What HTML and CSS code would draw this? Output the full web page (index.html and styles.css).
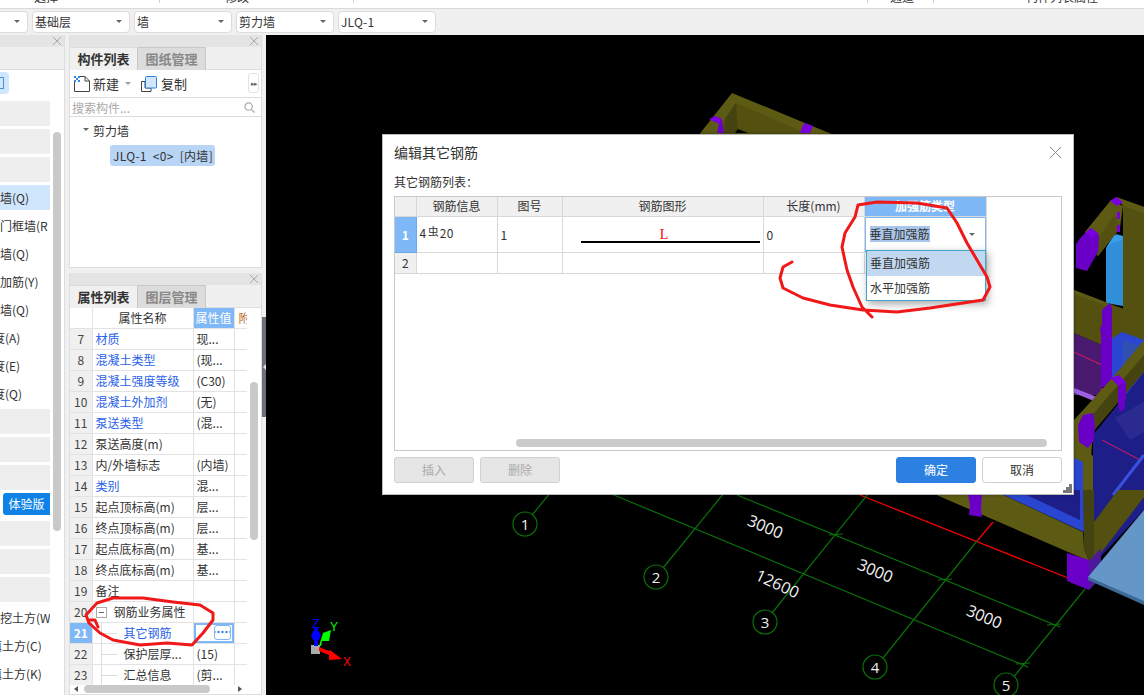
FILE: index.html
```html
<!DOCTYPE html>
<html lang="zh-CN">
<head>
<meta charset="utf-8">
<title>编辑其它钢筋</title>
<link rel="stylesheet" href="styles.css">
</head>
<body>
<div class="app">
  <div class="topstrip">
    <span class="ts ts1">选择</span><span class="ts ts2">修改</span><span class="ts ts3"></span><span class="ts ts4">通道</span><span class="ts ts5">构件列表属性</span>
  </div>
  <div class="toolbar">
    <div class="sel sel-first"><i class="caret"></i></div>
    <div class="sel">基础层<i class="caret"></i></div>
    <div class="sel">墙<i class="caret"></i></div>
    <div class="sel">剪力墙<i class="caret"></i></div>
    <div class="sel sel-latin">JLQ-1<i class="caret"></i></div>
  </div>
  <div class="main">
    <aside class="nav">
      <div class="panelhead"><svg class="close" viewBox="0 0 8 8"><path d="M0 0L8 8M8 0L0 8"/></svg></div>
      <div class="navtabs"></div>
      <div class="navbody">
        <div class="navtool"><span class="navtoolbtn"><i class="navglyph"></i></span></div>
        <ul class="navlist">
          <li class="g"></li><li class="g"></li><li class="g"></li>
          <li class="on">墙(Q)</li>
          <li>门框墙(R</li>
          <li>墙(Q)</li>
          <li>加筋(Y)</li>
          <li>墙(Q)</li>
          <li class="cut">度(A)</li>
          <li class="cut">度(E)</li>
          <li class="cut">度(Q)</li>
          <li class="g"></li><li class="g"></li><li class="g"></li>
          <li class="trial"><span class="badge">体验版</span></li>
          <li class="g"></li><li class="g"></li><li class="g"></li>
          <li>挖土方(W</li>
          <li class="cut2">填土方(C)</li>
          <li class="cut2">填土方(K)</li>
        </ul>
        <div class="navscroll"></div>
      </div>
    </aside>
    <div class="col">
      <section class="panel panel-top">
        <div class="panelhead"><svg class="close" viewBox="0 0 8 8"><path d="M0 0L8 8M8 0L0 8"/></svg></div>
        <div class="tabs"><span class="tab active">构件列表</span><span class="tab">图纸管理</span></div>
        <div class="tools">
          <svg class="ico" viewBox="0 0 16 16"><path class="docline" d="M.5 5V15.500H15.500V5L11 .5H6"/><path class="docline" d="M11 .5V5H15.500"/><path class="doccheck" d="M0 0h2v2H0zM4 0h2v2H4zM2 2h2v2H2zM0 4h2v2H0zM4 4h2v2H4z"/></svg>
          <span class="toollabel">新建</span><i class="caret caret-light"></i>
          <svg class="ico ico-copy" viewBox="0 0 16 16"><path class="docline" d="M.5 5.500H4V12H10V15.500H.5z"/><rect class="copyfront" x="4.500" y=".5" width="11" height="11.500" rx="1"/></svg>
          <span class="toollabel">复制</span>
          <span class="more">&#9656;&#9656;</span>
        </div>
        <div class="search"><span>搜索构件...</span><svg class="mag" viewBox="0 0 12 12"><circle cx="5" cy="5" r="4"/><path d="M8 8l3.500 3.500"/></svg></div>
        <div class="tree">
          <div class="treeroot"><i class="caret caret-tree"></i>剪力墙</div>
          <div class="treeitem">JLQ-1 &lt;0&gt; [内墙]</div>
        </div>
      </section>
      <section class="panel panel-bottom">
        <div class="panelhead"><svg class="close" viewBox="0 0 8 8"><path d="M0 0L8 8M8 0L0 8"/></svg></div>
        <div class="tabs"><span class="tab active">属性列表</span><span class="tab">图层管理</span></div>
        <div class="propwrap">
          <table class="props">
            <colgroup><col class="c-num"><col class="c-name"><col class="c-val"><col class="c-ext"></colgroup>
            <thead><tr><th></th><th>属性名称</th><th class="hl">属性值</th><th class="ext">附加</th></tr></thead>
            <tbody>
              <tr><td class="n">7</td><td class="link">材质</td><td>现...</td><td></td></tr>
              <tr><td class="n">8</td><td class="link">混凝土类型</td><td>(现...</td><td></td></tr>
              <tr><td class="n">9</td><td class="link">混凝土强度等级</td><td>(C30)</td><td></td></tr>
              <tr><td class="n">10</td><td class="link">混凝土外加剂</td><td>(无)</td><td></td></tr>
              <tr><td class="n">11</td><td class="link">泵送类型</td><td>(混...</td><td></td></tr>
              <tr><td class="n">12</td><td>泵送高度(m)</td><td></td><td></td></tr>
              <tr><td class="n">13</td><td>内/外墙标志</td><td>(内墙)</td><td></td></tr>
              <tr><td class="n">14</td><td class="link">类别</td><td>混...</td><td></td></tr>
              <tr><td class="n">15</td><td>起点顶标高(m)</td><td>层...</td><td></td></tr>
              <tr><td class="n">16</td><td>终点顶标高(m)</td><td>层...</td><td></td></tr>
              <tr><td class="n">17</td><td>起点底标高(m)</td><td>基...</td><td></td></tr>
              <tr><td class="n">18</td><td>终点底标高(m)</td><td>基...</td><td></td></tr>
              <tr><td class="n">19</td><td>备注</td><td></td><td></td></tr>
              <tr><td class="n">20</td><td class="group"><span class="minus"></span>钢筋业务属性</td><td></td><td></td></tr>
              <tr><td class="n n-on">21</td><td class="child link">其它钢筋</td><td class="valon"><span class="dots"></span></td><td></td></tr>
              <tr><td class="n">22</td><td class="child">保护层厚...</td><td>(15)</td><td></td></tr>
              <tr><td class="n">23</td><td class="child">汇总信息</td><td>(剪...</td><td></td></tr>
            </tbody>
          </table>
          <div class="vscroll"></div>
        </div>
        <div class="hbar"><i class="tri tri-l"></i><span class="hthumb"></span><i class="tri tri-r"></i></div>
      </section>
    </div>
    <div class="splitter"><span class="handle"><i class="notch"></i></span></div>
    <div class="canvas">
      <svg class="scene" viewBox="266 35 878 660" xmlns="http://www.w3.org/2000/svg">
        <!-- upper olive frame -->
        <polygon class="ol1" points="732,93 880,154 880,200 690,200 690,146"/>
        <polygon class="ol2" points="736,103 880,165 880,200 722,200 722,123"/>
        <polygon class="ol3" points="736,103 725,119 724,133 738,133"/>
        <polygon class="bk" points="735,133 738,129 748,133"/>
        <polygon class="pu1" points="709,119 715,116 722,119 719,124"/>
        <polygon class="pu2" points="719,124 722,119 724,133 717,133"/>
        <polygon class="pu1" points="800,133 804,123 813,126 810,133"/>

        <!-- right side structure -->
        <polygon class="ol2" points="1116,197 1144,207 1144,320 1123,310 1123,205"/>
        <polygon class="ol1" points="1116,197 1144,207 1144,213 1123,206"/>
        <polygon class="lb" points="1106,248 1116,234 1123,236 1123,306 1106,303"/>
        <polygon class="lb2" points="1106,248 1114,235 1123,236 1122,240 1112,243"/>
        <polygon class="ol1" points="1111,200 1085,232 1098,256 1120,228 1123,206"/>
        <polygon class="ol2" points="1098,256 1120,228 1115,214 1090,250"/>
        <rect class="pu1" x="1117" y="212" width="3" height="7"/>
        <rect class="pu1" x="1117" y="225" width="3" height="7"/>
        <polygon class="pu1" points="1110,201 1116,197 1123,202 1117,206"/>
        <polygon class="pu2" points="1082,236 1091,228 1099,235 1098,252 1087,271 1076,268 1076,244"/>
        <polygon class="pu1" points="1085,233 1091,228 1098,233 1093,238"/>

        <polygon class="bu" points="1112,325 1144,338 1144,400 1112,400"/>
        <polygon class="bu2" points="1123,340 1144,348 1144,372 1123,372"/>
        <polygon class="pp" points="1074,333 1102,345 1102,395 1074,395"/>
        <polygon class="ol2" points="1074,290 1110,304 1144,316 1144,340 1122,332 1102,345 1074,333"/>
        <polygon class="ol1" points="1074,290 1108,303 1112,308 1074,294"/>
        <polyline class="pinkline" points="1074,352 1102,365"/>
        <polygon class="lilac" points="1074,388 1097,397 1094,401 1074,393"/>
        <polyline class="pinkline" points="1097,396 1103,388"/>
        <polygon class="pu2" points="1102,310 1110,303 1112,308 1112,383 1101,388 1101,335 1100,328 1102,325"/>

        <!-- navy window lower right -->
        <polygon class="nv" points="1093,435 1144,372 1144,510 1093,565"/>
        <polygon class="nv2" points="1115,418 1144,402 1144,432 1130,440"/>
        <polyline class="pinkline" points="1102,440 1140,460"/>
        <polyline class="blueedge" points="1113,495 1144,455"/>
        <polygon class="ol1" points="1144,340 1144,355 1093,432 1090,470 1074,460 1074,420 1115,375"/>
        <polygon class="ol3" points="1144,355 1144,372 1093,432 1088,420"/>
        <polygon class="pu1" points="1111,378 1119,375 1126,382 1118,386"/>
        <polygon class="pu2" points="1118,386 1126,382 1126,396 1124,410 1120,412 1118,405"/>
        <polygon class="pu2" points="1083,415 1093,413 1095,425 1094,440 1088,448 1079,442 1078,425"/>
        <polygon class="bu" points="1074,458 1083,462 1083,495 1074,495"/>
        <polygon class="ol1" points="1083,447 1093,456 1093,495 1083,495"/>

        <!-- bottom beam -->
        <polygon class="ol1" points="925,490 993,490 1083,532 1084,548 1089,561"/>
        <polygon class="bu" points="993,490 1084,490 1084,532"/>
        <polygon class="nv" points="1016,490 1080,490 1080,520"/>
        <polygon class="ol3" points="1083,490 1094,490 1094,561 1089,561 1084,548"/>
        <polygon class="ol2" points="1094,522 1118,490 1144,490 1144,497 1094,562"/>
        <polygon class="pu2" points="968,495 982,495 981,508 982,517 969,515 970,505"/>
        <polyline class="redline" points="860,495 1068,578"/>
        <polyline class="redline" points="977,541 993,522"/>
        <polygon class="pu2" points="1067,553 1089,560 1089,590 1067,581"/>
        <polygon class="pu3" points="1089,561 1101,548 1101,578 1089,590"/>
        <polygon class="plane" points="1088,577 1144,510 1144,602"/>
        <polygon class="plane2" points="1088,577 1144,601 1144,605 1088,580"/>

        <!-- grid -->
        <g class="grid">
          <line x1="533" y1="514" x2="550" y2="493"/>
          <line x1="663" y1="568" x2="724" y2="493"/>
          <line x1="772" y1="613" x2="868" y2="494"/>
          <line x1="883" y1="658" x2="977" y2="541"/>
          <line x1="1000" y1="694" x2="1085" y2="589"/>
          <line x1="609" y1="493" x2="1028" y2="667"/>
          <line x1="737" y1="495" x2="1060" y2="627"/>
          <path d="M829 535l14 -1M938 580l14 -1M1047 625l14 -1M1016 664l14 -1"/>
          <circle cx="525" cy="524" r="12"/>
          <circle cx="656" cy="577" r="12"/>
          <circle cx="765" cy="622" r="12"/>
          <circle cx="875" cy="667" r="12"/>
          <circle cx="1006" cy="685" r="12"/>
        </g>
        <g class="gridnum">
          <text x="525" y="529.500">1</text>
          <text x="656" y="583">2</text>
          <text x="765" y="628">3</text>
          <text x="875" y="673">4</text>
          <text x="1006" y="691">5</text>
        </g>
        <g class="dim">
          <text transform="translate(763 532) rotate(23)">3000</text>
          <text transform="translate(873 576) rotate(23)">3000</text>
          <text transform="translate(982 622) rotate(23)">3000</text>
          <text transform="translate(775 589) rotate(25)">12600</text>
        </g>

        <!-- axis gizmo -->
        <rect class="ax-grey" x="311" y="645" width="9" height="9"/>
        <rect class="ax-blue" x="314" y="630" width="4" height="16"/>
        <polygon class="ax-blue" points="316,627 321,635 319,640 313,640 311,635"/>
        <rect class="ax-blue" x="313" y="627" width="6" height="1.500"/>
        <polygon class="ax-green" points="319,646 323,633 331,630 329,641 322,641 321,646"/>
        <polygon class="ax-red" points="319,647 329,651 330,650 342,659 329,660 329,655 319,651"/>
        <text class="ax-z" x="316" y="628">Z</text>
        <text class="ax-y" x="334" y="631">Y</text>
        <text class="ax-x" x="347" y="666">X</text>
      </svg>
    </div>
  </div>

  <div class="dialog">
    <div class="dlgtitle">编辑其它钢筋<svg class="dlgclose" viewBox="0 0 11 11"><path d="M0 0L11 11M11 0L0 11"/></svg></div>
    <div class="dlglabel">其它钢筋列表：</div>
    <div class="gridbox">
      <table class="rebar">
        <colgroup><col class="r0"><col class="r1"><col class="r2"><col class="r3"><col class="r4"><col class="r5"></colgroup>
        <thead>
          <tr><th></th><th>钢筋信息</th><th>图号</th><th>钢筋图形</th><th>长度(mm)</th><th class="hl">加强筋类型</th></tr>
        </thead>
        <tbody>
          <tr class="r-a">
            <td class="n n-on">1</td>
            <td class="raised">4<span class="steel">虫</span>20</td>
            <td>1</td>
            <td class="shape"><div class="shapeline"><span class="shapel">L</span></div></td>
            <td>0</td>
            <td class="editing"><span class="seltext">垂直加强筋</span><i class="caret"></i></td>
          </tr>
          <tr class="r-b"><td class="n">2</td><td></td><td></td><td></td><td></td><td></td></tr>
        </tbody>
      </table>
      <div class="gridscroll"></div>
    </div>
    <div class="dlgfoot">
      <button class="btn off">插入</button>
      <button class="btn off">删除</button>
      <span class="spacer"></span>
      <button class="btn primary">确定</button>
      <button class="btn">取消</button>
    </div>
    <ul class="droplist">
      <li class="picked">垂直加强筋</li>
      <li>水平加强筋</li>
    </ul>
    <svg class="grip" viewBox="0 0 9 9"><path d="M6 0h3v3H6zM3 3h3v3H3zM6 3h3v3H6zM0 6h3v3H0zM3 6h3v3H3zM6 6h3v3H6z"/></svg>
  </div>

  <svg class="ink" viewBox="0 0 1144 695" xmlns="http://www.w3.org/2000/svg">
    <polyline points="872,317 862,307 853,287 847,270 842,247 845,233 855,217 858,205 877,202 917,203 947,208 957,223 967,243 977,260 987,277 990,287 983,300 963,303 930,308 897,312 863,310 830,305 803,298 783,288 780,278 783,267 792,262"/>
    <polyline points="97,603 113,598 143,598 173,602 200,605 213,613 213,620 203,633 192,645 167,643 140,645 113,640 100,633 89,623 86,615 97,603"/>
    <polyline points="90,620 95,620 98,627"/>
  </svg>
</div>
</body>
</html>
```

FILE: styles.css
```css
* { box-sizing: border-box; }
html, body { margin: 0; padding: 0; height: 100%; overflow: hidden; }
body { font: 12px/1.2 "Noto Sans CJK SC", "Liberation Sans", sans-serif; color: #333; background: #f0f0f0; }
ul { list-style: none; margin: 0; padding: 0; }
.app { position: relative; width: 1144px; height: 695px; overflow: hidden; display: flex; flex-direction: column; }

.topstrip { height: 9px; flex: none; background: #fff; border-bottom: 1px solid #d9d9d9; display: flex; overflow: hidden; font-size: 12px; line-height: 12px; color: #333; }
.ts { height: 12px; margin-top: -9px; padding-top: 0; border-right: 1px solid #d0d0d0; flex: none; white-space: nowrap; }
.ts1 { width: 160px; padding-left: 34px; }
.ts2 { width: 194px; padding-left: 65px; }
.ts3 { width: 514px; }
.ts4 { width: 66px; padding-left: 22px; }
.ts5 { width: 210px; padding-left: 92px; border-right: 0; }

.toolbar { height: 26px; flex: none; display: flex; gap: 4px; align-items: center; background: #f0f0f0; }
.sel { position: relative; width: 98px; height: 22px; margin-top: -1px; background: #fff; border: 1px solid #dcdcdc; border-radius: 4px; padding-left: 2px; font-size: 12px; line-height: 20px; }
.sel-first { width: 28px; border-left: 0; border-radius: 0 4px 4px 0; }
.sel-latin { letter-spacing: .2px; }
.caret { position: absolute; right: 7px; top: 8px; width: 0; height: 0; border: 3px solid transparent; border-top: 3px solid #666; border-bottom: 0; }

.main { flex: 1; min-height: 0; display: flex; }
.panelhead { position: relative; height: 12px; flex: none; background: #e4e4e4; }
.close { position: absolute; right: 3px; top: 2px; width: 8px; height: 8px; stroke: #a8a8a8; stroke-width: 1; fill: none; }

.nav { width: 65px; flex: none; display: flex; flex-direction: column; background: #fff; border-right: 1px solid #ddd; }
.navtabs { height: 23px; flex: none; background: #f0f0f0; border-bottom: 1px solid #ddd; }
.navbody { position: relative; flex: 1; min-height: 0; overflow: hidden; }
.navtool { height: 31px; padding-top: 2px; }
.navtoolbtn { display: flex; align-items: center; width: 9px; height: 22px; background: #d0e6fc; border-radius: 0 4px 4px 0; }
.navglyph { display: block; width: 4px; height: 12px; border: 1px solid #4a90e2; border-left: 0; }
.navlist { width: 50px; }
.navlist li { height: 25px; margin-bottom: 3px; font-size: 12px; line-height: 25px; white-space: nowrap; overflow: hidden; color: #333; }
.navlist .g { background: #eee; }
.navlist .on { background: #d0e6fc; }
.navlist .cut { text-indent: -7px; }
.navlist .cut2 { text-indent: -10px; }
.navlist .trial { background: transparent; padding-left: 3px; overflow: visible; }
.badge { display: block; height: 22px; margin-top: 1px; background: #0f82e6; color: #fff; border-radius: 3px 0 0 3px; text-align: center; line-height: 22px; font-size: 12px; }
.navscroll { position: absolute; left: 53px; top: 62px; width: 8px; height: 399px; border-radius: 4px; background: #c9c9c9; }

.col { width: 193px; margin-left: 4px; flex: none; display: flex; flex-direction: column; gap: 5px; }
.panel { display: flex; flex-direction: column; background: #fff; border: 1px solid #ddd; border-top: 0; }
.panel-top { height: 233px; }
.panel-bottom { flex: 1; min-height: 0; }
.tabs { height: 23px; flex: none; display: flex; background: #f0f0f0; border-bottom: 1px solid #ddd; }
.tab { width: 68px; height: 23px; background: #dcdcdc; border: 1px solid #c8c8c8; border-left: 0; border-bottom: 0; color: #888; font-weight: 700; font-size: 13px; line-height: 21px; text-align: center; }
.tab.active { background: #f0f0f0; color: #333; border-top: 1px solid #ddd; border-right: 1px solid #c8c8c8; }

.tools { position: relative; height: 28px; flex: none; display: flex; align-items: center; padding-left: 4px; border-bottom: 1px solid #ddd; }
.ico { width: 16px; height: 16px; flex: none; margin-right: 3px; }
.ico-copy { margin-left: 10px; margin-right: 4px; }
.docline { fill: none; stroke: #444; stroke-width: 1; }
.doccheck { fill: #2f86e6; }
.copyfront { fill: #d2e6fb; stroke: #2f7fdc; stroke-width: 1; }
.toollabel { font-size: 13px; }
.caret-light { position: static; margin-left: 6px; border-top-color: #999; }
.more { position: absolute; right: 2px; top: 3px; width: 11px; height: 20px; border: 1px solid #e2e2e2; border-radius: 3px; font-size: 7px; line-height: 18px; text-align: center; letter-spacing: -1px; color: #666; overflow: hidden; background: #fff; }
.search { position: relative; height: 19px; flex: none; padding-left: 2px; line-height: 19px; color: #aaa; font-size: 12px; border-bottom: 1px solid #ddd; }
.mag { position: absolute; right: 6px; top: 4px; width: 11px; height: 11px; fill: none; stroke: #aaa; stroke-width: 1.300; }
.tree { flex: 1; padding: 5px 0 0 0; position: relative; }
.treeroot { position: relative; padding-left: 23px; height: 23px; line-height: 17px; }
.caret-tree { left: 13px; right: auto; top: 6px; border-width: 3px; }
.treeitem { width: 105px; height: 21px; margin: 0 0 0 40px; padding-left: 3px; background: #b9d5f5; border-radius: 3px; line-height: 21px; white-space: nowrap; letter-spacing: .3px; word-spacing: 3px; }

.propwrap { position: relative; flex: 1; min-height: 0; overflow: hidden; }
.props { width: 177px; table-layout: fixed; border-collapse: collapse; font-size: 12px; }
.c-num { width: 22px; } .c-name { width: 101px; } .c-val { width: 41px; } .c-ext { width: 13px; }
.props th, .props td { height: 21px; padding: 0 0 0 3px; border: 1px solid #e2e2e2; border-top: 0; font-weight: 400; white-space: nowrap; overflow: hidden; text-align: left; line-height: 20px; }
.props thead th { height: 20px; text-align: center; padding: 0; line-height: 19px; border-left: 0; }
.props tr > *:first-child { border-left: 0; }
.props tr > *:last-child { border-right: 0; }
.hl { background: #7fb8f7; color: #fff; }
.props th.hl { background: #7fb8f7; color: #fff; }
.props th.ext { color: #c26a1f; text-align: left; padding-left: 4px; }
.props .n { background: #f0f0f0; padding: 0; text-align: center; color: #444; }
.props .n-on, .rebar .n-on { background: #7fb8f7; color: #fff; font-weight: 700; }
.props .link { color: #2a62e8; }
.props .group { padding-left: 25px; position: relative; }
.minus { display: inline-block; width: 11px; height: 11px; margin-left: -22px; margin-right: 7px; vertical-align: -1px; border: 1px solid #aaa; background: linear-gradient(#666, #666) center / 5px 1px no-repeat #fff; }
.props .child { padding-left: 31px; background: linear-gradient(#ddd, #ddd) 8px 0 / 1px 100% no-repeat, linear-gradient(#ddd, #ddd) 8px 10px / 16px 1px no-repeat; }
.props td.valon { box-shadow: inset 0 0 0 2px #7fb8f7; text-align: right; padding-right: 3px; }
.dots { display: inline-block; width: 17px; height: 15px; vertical-align: -2px; border: 1px solid #7fb8f7; border-radius: 3px; background: radial-gradient(circle, #2f7fdc 1.200px, transparent 1.600px) 1.500px center / 4px 4px repeat-x #fff; }
.vscroll { position: absolute; left: 180px; top: 74px; width: 8px; height: 158px; border-radius: 4px; background: #c9c9c9; }
.hbar { position: relative; height: 9px; flex: none; background: #fff; }
.hthumb { position: absolute; left: 14px; top: 0; width: 126px; height: 8px; border-radius: 4px; background: #c9c9c9; }
.tri { position: absolute; top: 1px; width: 0; height: 0; border: 3px solid transparent; }
.tri-l { left: 4px; border-right: 4px solid #555; border-left: 0; }
.tri-r { right: 19px; border-left: 4px solid #555; border-right: 0; }

.splitter { width: 4px; flex: none; }
.handle { display: flex; align-items: center; justify-content: center; width: 4px; height: 100px; margin-top: 282px; background: #6c7079; }
.notch { display: block; width: 0; height: 0; border: 3px solid transparent; border-right: 3px solid #dfe2e6; border-left: 0; }
.canvas { flex: 1; min-width: 0; background: #000; }
.scene { display: block; width: 878px; height: 660px; }

.ol1 { fill: #5d5a14; } .ol2 { fill: #535010; } .ol3 { fill: #454310; }
.bk { fill: #000; }
.pu1 { fill: #7a00e0; } .pu2 { fill: #6a00c8; } .pu3 { fill: #4c1a98; }
.pp { fill: #4a1a70; } .lilac { fill: #9a60e0; }
.lb { fill: #2f8fd8; } .lb2 { fill: #3aa0e8; }
.bu { fill: #2a46d0; } .bu2 { fill: #3050b0; } .nv { fill: #1e1e88; } .nv2 { fill: #2a2a90; }
.plane { fill: #6496c8; } .plane2 { fill: #3c6a94; }
.pinkline { stroke: #e01858; stroke-width: 1; fill: none; }
.blueedge { stroke: #3a50e0; stroke-width: 3; fill: none; }
.redline { stroke: #f00000; stroke-width: 1.300; fill: none; }
.grid line, .grid path { stroke: #0a700a; stroke-width: 1.200; fill: none; }
.grid circle { stroke: #0a700a; stroke-width: 1.200; fill: #000; }
.gridnum text { fill: #f0f0f0; font: 15px "Open Sans", "Liberation Sans", sans-serif; text-anchor: middle; }
.dim text { fill: #f4f4f4; font: 16px "Open Sans", "Liberation Sans", sans-serif; text-anchor: middle; }
.ax-grey { fill: #aaa; } .ax-blue { fill: #0000ff; } .ax-green { fill: #00ff00; } .ax-red { fill: #ff0000; }
.ax-z, .ax-y, .ax-x { font: 12px "Liberation Sans", sans-serif; text-anchor: middle; }
.ax-z { fill: #0000ff; } .ax-y { fill: #00ff00; } .ax-x { fill: #ff0000; }

.dialog { position: absolute; left: 382px; top: 134px; width: 692px; height: 361px; padding: 0 11px; display: flex; flex-direction: column; background: #fff; border: 1px solid #bbb; box-shadow: 0 0 3px rgba(0,0,0,.3); }
.dlgtitle { position: relative; height: 35px; padding-top: 8px; font-size: 14px; line-height: 18px; color: #333; }
.dlgclose { position: absolute; right: 1px; top: 12px; width: 11px; height: 11px; stroke: #888; stroke-width: 1; fill: none; }
.dlglabel { height: 26px; padding-top: 4px; line-height: 16px; font-size: 12px; color: #333; }
.gridbox { position: relative; height: 255px; flex: none; border: 1px solid #c8c8c8; }
.rebar { width: 591px; table-layout: fixed; border-collapse: collapse; font-size: 12px; }
.r0 { width: 21px; } .r1 { width: 81px; } .r2 { width: 65px; } .r3 { width: 201px; } .r4 { width: 101px; } .r5 { width: 122px; }
.rebar th, .rebar td { padding: 0 0 0 3px; border: 1px solid #d8d8d8; font-weight: 400; white-space: nowrap; text-align: left; }
.rebar tr > *:first-child { border-left: 0; }
.rebar thead th { height: 19px; background: #f0f0f0; text-align: center; padding: 0; border-top: 0; line-height: 18px; }
.rebar thead th.hl { background: #7fb8f7; color: #fff; font-weight: 700; }
.r-a td { height: 36px; line-height: 33px; }
.r-b td { height: 21px; line-height: 19px; }
.rebar .n { background: #f0f0f0; text-align: center; padding: 0; }
.rebar .n-on { background: #7fb8f7; border: 1px solid #6aa8ee; }
.rebar .raised { line-height: 28px; vertical-align: top; letter-spacing: .5px; }
.steel { font-size: 11px; vertical-align: 2px; margin: 0 1px; letter-spacing: 0; }
.rebar .shape { padding: 0 3px 0 18px; line-height: 0; vertical-align: top; }
.shapeline { height: 26px; border-bottom: 2px solid #000; text-align: center; }
.shapel { display: inline-block; font: 14px/14px "Liberation Serif", serif; color: #f00; margin: 11px 12px 0 0; }
.rebar td.editing { position: relative; padding-left: 5px; box-shadow: inset 0 0 0 1px #7fb8f7; }
.seltext { background: #a9c6ea; display: inline-block; line-height: 16px; height: 16px; vertical-align: 1px; }
.editing .caret { top: 16px; right: 11px; }
.gridscroll { position: absolute; left: 121px; top: 242px; width: 531px; height: 8px; border-radius: 4px; background: #cbcbcb; }
.dlgfoot { display: flex; gap: 6px; margin-top: 6px; height: 26px; }
.spacer { flex: 1; }
.btn { width: 80px; height: 26px; padding: 0; background: #fff; border: 1px solid #d0d0d0; border-radius: 3px; font: 12px/1 "Noto Sans CJK SC", sans-serif; color: #333; }
.btn.off { background: #e6e6e6; color: #aaa; }
.btn.primary { background: #2b80e2; border-color: #2b80e2; color: #fff; }
.droplist { position: absolute; left: 483px; top: 115px; width: 120px; height: 51px; background: #fff; border: 1px solid #3ea6cc; box-shadow: 2px 3px 8px rgba(0,0,0,.35); }
.droplist li { height: 25px; line-height: 24px; padding-left: 3px; color: #333; }
.droplist .picked { background: #c1d8f0; }
.grip { position: absolute; right: 1px; bottom: 1px; width: 9px; height: 9px; fill: #777; }

.ink { position: absolute; left: 0; top: 0; width: 1144px; height: 695px; pointer-events: none; }
.ink polyline { fill: none; stroke: #f01818; stroke-width: 3; stroke-linejoin: round; stroke-linecap: round; }
```
